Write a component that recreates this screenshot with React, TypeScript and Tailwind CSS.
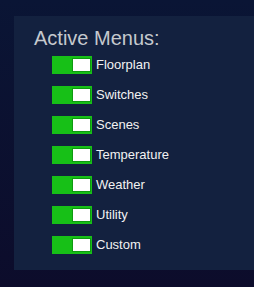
import React from "react";

const items = ["Floorplan", "Switches", "Scenes", "Temperature", "Weather", "Utility", "Custom"];

function Toggle() {
  return (
    <div className="w-[40px] h-[18px] bg-[#17c017] flex items-center justify-end pr-[1px]">
      <div className="w-[19px] h-[14px] bg-white border border-[#0f9a10]" />
    </div>
  );
}

export default function App() {
  return (
    <div
      className="w-[254px] h-[287px] overflow-hidden pt-[16px] pl-[14px] bg-gradient-to-b from-[#0a1535] to-[#0c0c2b]"
      style={{ fontFamily: '"Liberation Sans", Arial, sans-serif' }}
    >
      <div className="bg-[#13213f] pt-[10px] pb-[10px] pl-[20px]">
        <div className="text-[20px] leading-[24px] text-[#c5c9ce]">Active Menus:</div>
        <div className="flex flex-col pl-[18px]">
          {items.map((it) => (
            <div key={it} className="h-[30px] flex items-center gap-[4px]">
              <Toggle />
              <span className="text-[13px] text-[#f2f2f2] leading-[16px]">{it}</span>
            </div>
          ))}
        </div>
      </div>
    </div>
  );
}
